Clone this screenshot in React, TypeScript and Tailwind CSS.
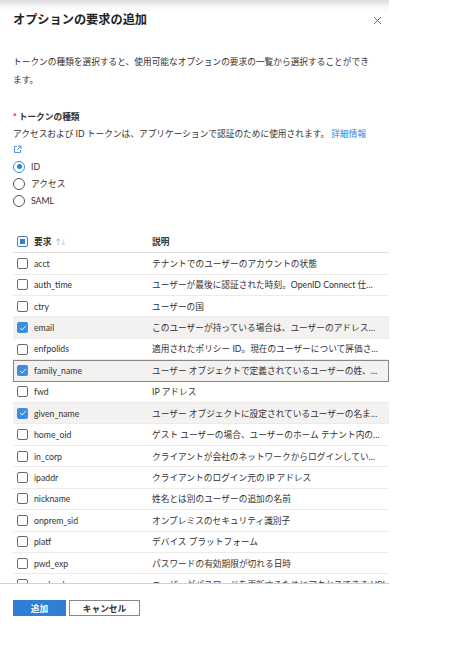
import React from 'react';

interface Claim {
  name: string;
  desc: string;
  checked?: boolean;
  mark?: 'bg' | 'box';
}

const claims: Claim[] = [
  { name: 'acct', desc: 'テナントでのユーザーのアカウントの状態' },
  { name: 'auth_time', desc: 'ユーザーが最後に認証された時刻。OpenID Connect 仕…' },
  { name: 'ctry', desc: 'ユーザーの国' },
  { name: 'email', desc: 'このユーザーが持っている場合は、ユーザーのアドレス…', checked: true, mark: 'bg' },
  { name: 'enfpolids', desc: '適用されたポリシー ID。現在のユーザーについて評価さ…' },
  { name: 'family_name', desc: 'ユーザー オブジェクトで定義されているユーザーの姓、…', checked: true, mark: 'box' },
  { name: 'fwd', desc: 'IP アドレス' },
  { name: 'given_name', desc: 'ユーザー オブジェクトに設定されているユーザーの名ま…', checked: true, mark: 'bg' },
  { name: 'home_oid', desc: 'ゲスト ユーザーの場合、ユーザーのホーム テナント内の…' },
  { name: 'in_corp', desc: 'クライアントが会社のネットワークからログインしてい…' },
  { name: 'ipaddr', desc: 'クライアントのログイン元の IP アドレス' },
  { name: 'nickname', desc: '姓名とは別のユーザーの追加の名前' },
  { name: 'onprem_sid', desc: 'オンプレミスのセキュリティ識別子' },
  { name: 'platf', desc: 'デバイス プラットフォーム' },
  { name: 'pwd_exp', desc: 'パスワードの有効期限が切れる日時' },
  { name: 'pwd_url', desc: 'ユーザーがパスワードを更新するためにアクセスできる URL' },
];

const CheckBox = ({ checked }: { checked?: boolean }) =>
  checked ? (
    <span className="flex h-[11px] w-[11px] shrink-0 items-center justify-center rounded-[2px] bg-[#3c8ddf]">
      <svg width="8" height="8" viewBox="0 0 8 8" fill="none">
        <path d="M1.2 4.2 3.1 6 6.8 1.9" stroke="#fff" strokeWidth="0.9" />
      </svg>
    </span>
  ) : (
    <span className="h-[11px] w-[11px] shrink-0 rounded-[2px] border border-[#6e6c6a] bg-white" />
  );

const Radio = ({ label, on }: { label: string; on?: boolean }) => (
  <div className="flex h-[17px] items-center gap-[6px]">
    <span
      className={`flex h-[12px] w-[12px] items-center justify-center rounded-full border ${on ? 'border-[#3c8ddf]' : 'border-[#555]'}`}
    >
      {on && <span className="h-[5px] w-[5px] rounded-full bg-[#2f7fd6]" />}
    </span>
    <span>{label}</span>
  </div>
);

export default function App() {
  return (
    <div
      className="min-h-[646px] w-[476px] bg-white text-[8.7px] text-[#323130]"
      style={{ fontFamily: 'Lato, "Noto Sans CJK JP", sans-serif' }}
    >
      <div className="w-[389px]">
        {/* ヘッダー */}
        <div className="flex h-[40px] items-center justify-between bg-[linear-gradient(to_bottom,#dcdcdc_0px,#f6f6f6_6px,#ffffff_12px)] pl-[13px] pr-[6px]">
          <h1 className="text-[12.2px] font-bold text-[#252423]">オプションの要求の追加</h1>
          <svg width="9" height="9" viewBox="0 0 9 9" className="mr-[1px]">
            <path d="M1 1 8 8M8 1 1 8" stroke="#605e5c" strokeWidth="0.9" />
          </svg>
        </div>

        <p className="mt-[13px] pl-[13px] pr-[14px] leading-[17.7px]">
          トークンの種類を選択すると、使用可能なオプションの要求の一覧から選択することができます。
        </p>

        <div className="mt-[20px] pl-[13px] leading-[17.7px] font-bold">
          <span className="mr-[2px] text-[#c4262e]">*</span>トークンの種類
        </div>
        <p className="pl-[13px] pr-[14px] leading-[15px]">
          アクセスおよび ID トークンは、アプリケーションで認証のために使用されます。{' '}
          <span className="text-[#2f7fd6]">詳細情報</span>
          <br />
          <svg width="9" height="9" viewBox="0 0 9 9" fill="none" className="inline-block">
            <path d="M4 1.5H1.5v6h6V5" stroke="#2f7fd6" strokeWidth="0.8" />
            <path d="M5 1h3v3M8 1 4.2 4.8" stroke="#2f7fd6" strokeWidth="0.8" />
          </svg>
        </p>

        <div className="mt-[2px] pl-[13px]">
          <Radio label="ID" on />
          <Radio label="アクセス" />
          <Radio label="SAML" />
        </div>

        {/* 要求テーブル */}
        <div className="mt-[22px] h-[352px] overflow-hidden pl-[13px]">
          <div className="flex h-[22px] items-center border-b border-[#e1dfdd] font-bold">
            <div className="flex w-[139px] shrink-0 items-center gap-[6px] pl-[4px]">
              <span className="flex h-[11px] w-[11px] items-center justify-center rounded-[2px] border border-[#4a7fc0] bg-white">
                <span className="h-[5px] w-[5px] bg-[#2f7fd6]" />
              </span>
              <span>要求</span>
              <span className="-ml-[2px] text-[7px] font-normal text-[#a19f9d]">
                ↑<span className="text-[#c8c6c4]">↓</span>
              </span>
            </div>
            <div>説明</div>
          </div>
          {claims.map((c) => (
            <div
              key={c.name}
              className={`flex h-[21.43px] items-center ${
                c.mark === 'box'
                  ? 'border border-[#8a8886] bg-[#f3f2f1]'
                  : c.mark === 'bg'
                    ? 'border-b border-[#edebe9] bg-[#f3f2f1]'
                    : 'border-b border-[#edebe9]'
              }`}
            >
              <div className={`flex shrink-0 items-center gap-[6px] ${c.mark === 'box' ? 'w-[138px] pl-[3px]' : 'w-[139px] pl-[4px]'}`}>
                <CheckBox checked={c.checked} />
                <span>{c.name}</span>
              </div>
              <div className="min-w-0 flex-1 overflow-hidden whitespace-nowrap pr-[8px]">{c.desc}</div>
            </div>
          ))}
        </div>

        {/* フッター */}
        <div className="flex gap-[3px] border-t border-[#d2d0ce] pl-[13px] pt-[16px]">
          <button className="flex h-[16px] w-[53px] items-center justify-center bg-[#2f7fd6] font-bold text-white">
            追加
          </button>
          <button className="flex h-[16px] w-[71px] items-center justify-center border border-[#8a8886] bg-white font-bold text-[#323130]">
            キャンセル
          </button>
        </div>
      </div>
    </div>
  );
}
